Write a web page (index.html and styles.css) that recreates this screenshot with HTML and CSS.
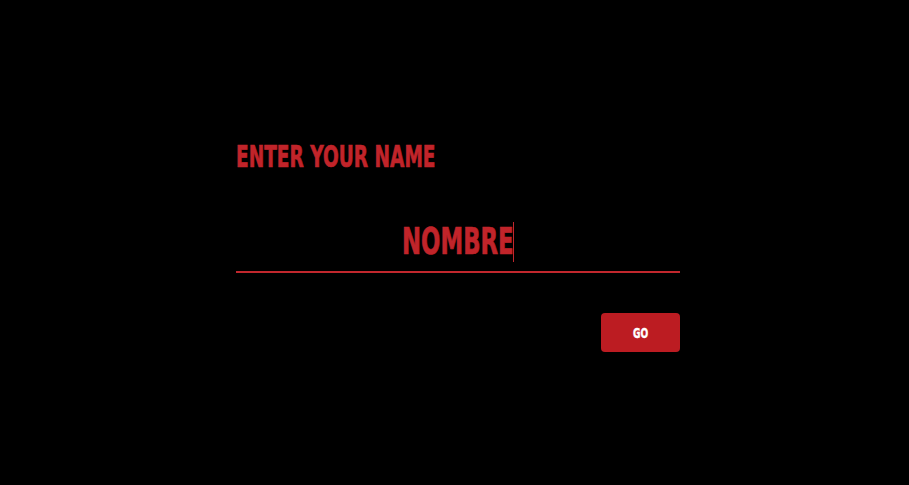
FILE: index.html
```html
<!DOCTYPE html>
<html>
<head>
<meta charset="utf-8">
<link rel="stylesheet" href="styles.css">
</head>
<body>
<main class="page">
  <form class="card">
    <h1 class="title"><span class="squeeze">ENTER YOUR NAME</span></h1>
    <div class="field">
      <span class="value"><span class="squeeze">NOMBRE</span><span class="caret"></span></span>
    </div>
    <div class="actions">
      <button type="button" class="go"><span class="squeeze">GO</span></button>
    </div>
  </form>
</main>
</body>
</html>
```
FILE: styles.css
```css
html, body {
  margin: 0;
  padding: 0;
  background: #000;
  height: 100%;
}
.page {
  display: flex;
  justify-content: center;
  padding-top: 138px;
  padding-left: 7px;
  font-family: "DejaVu Sans Condensed", "DejaVu Sans", sans-serif;
}
.card {
  width: 444px;
  display: flex;
  flex-direction: column;
}
.squeeze {
  display: inline-block;
  transform-origin: left center;
  -webkit-text-stroke: 0.7px currentColor;
}
.title {
  margin: 0;
  color: #c1242a;
  font-size: 31px;
  font-weight: 700;
  line-height: 36px;
  white-space: nowrap;
}
.title .squeeze {
  transform: scaleX(0.665);
}
.field {
  margin-top: 46px;
  height: 51px;
  border-bottom: 2px solid #c1272d;
  display: flex;
  justify-content: center;
  align-items: flex-start;
}
.value {
  position: relative;
  display: inline-block;
  width: 112px;
  color: #c1242a;
  font-size: 37px;
  font-weight: 700;
  line-height: 44px;
  white-space: nowrap;
}
.value .squeeze {
  transform: scaleX(0.685);
}
.caret {
  position: absolute;
  right: 0;
  top: 2px;
  width: 1px;
  height: 40px;
  background: #c1272d;
}
.actions {
  display: flex;
  justify-content: flex-end;
  margin-top: 40px;
}
.go {
  width: 79px;
  height: 39px;
  border: none;
  border-radius: 4px;
  background: #bc1c22;
  color: #fff;
  font-family: inherit;
  font-size: 14px;
  font-weight: 700;
  padding: 0;
  display: flex;
  align-items: center;
  justify-content: center;
}
.go .squeeze {
  transform: scaleX(0.72);
  transform-origin: center center;
  -webkit-text-stroke: 0.4px currentColor;
}
```
